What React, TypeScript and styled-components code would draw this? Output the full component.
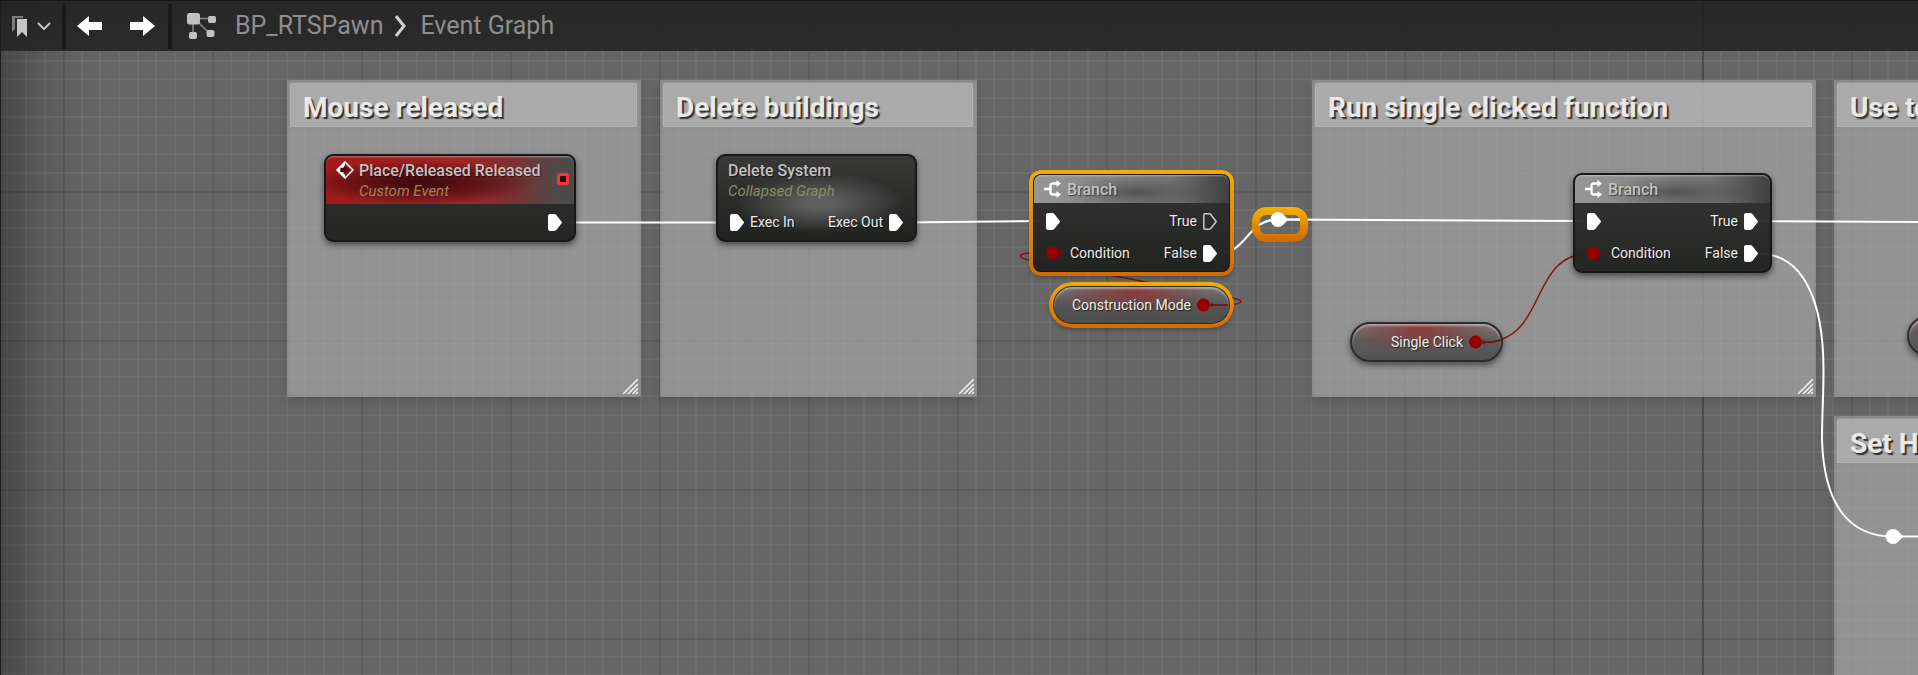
import React from "react";
import styled, { createGlobalStyle, css } from "styled-components";

const GlobalStyle = createGlobalStyle`
  *, *::before, *::after { box-sizing: border-box; }
  body {
    margin: 0;
    background: #666;
    font-family: Roboto, "Liberation Sans", sans-serif;
  }
  h2, h3, p { margin: 0; }
`;

/* ---------- page and grid ---------- */

const minor = "rgba(255, 255, 255, 0.05)";

const minorLines = (angle: string) =>
  `linear-gradient(${angle}, ${[19, 37, 56, 75, 93, 112, 131]
    .map((p) => `transparent ${p - 1}px, ${minor} ${p - 1}px, ${minor} ${p + 1}px, transparent ${p + 1}px`)
    .join(", ")})`;

const Editor = styled.div`
  display: grid;
  grid-template: minmax(100vh, auto) / minmax(0, 1fr);
  overflow: hidden;
  border-left: 1px solid #1c1c1c;
  background-color: #666;
  background-image:
    linear-gradient(90deg, rgba(0, 0, 0, 0.3), rgba(0, 0, 0, 0.12) 40px, rgba(0, 0, 0, 0.04) 75px, transparent 110px),
    linear-gradient(rgba(0, 0, 0, 0.18), rgba(0, 0, 0, 0.18)),
    linear-gradient(90deg, rgba(0, 0, 0, 0.1) 2px, transparent 2px),
    linear-gradient(180deg, rgba(0, 0, 0, 0.1) 2px, transparent 2px),
    ${minorLines("90deg")},
    ${minorLines("180deg")};
  background-size: auto, 2px 100%, 149px 149px, 149px 149px, 149px 149px, 149px 149px;
  background-position: 0 0, 1701px 0, 62px 42px, 62px 42px, 62px 42px, 62px 42px;
  background-repeat: no-repeat, no-repeat, repeat, repeat, repeat, repeat;

  > * { grid-area: 1 / 1; }
`;

const Graph = styled.main`
  position: relative;
  overflow: hidden;
`;

/* ---------- toolbar ---------- */

const Toolbar = styled.header`
  position: relative;
  z-index: 2;
  align-self: start;
  display: flex;
  align-items: center;
  height: 51px;
  padding-left: 10px;
  border-top: 1px solid #161616;
  background: linear-gradient(rgba(32, 32, 32, 0.9), rgba(38, 38, 38, 0.92));
`;

const ToolButton = styled.button`
  display: flex;
  align-items: center;
  gap: 9px;
  padding: 0;
  border: 0;
  background: none;
  color: #fff;
  cursor: pointer;
`;

const Divider = styled.span`
  width: 4px;
  height: 45px;
  background: #191919;
`;

const Bookmarks = styled(ToolButton)`
  width: 51px;
`;

const History = styled.div`
  display: flex;
  justify-content: space-between;
  width: 102px;
  padding: 0 13px 0 11px;
`;

const Breadcrumb = styled.nav`
  display: flex;
  align-items: center;
  padding-left: 15px;
  color: #8e8e8e;
  font-size: 25px;
  line-height: 30px;
`;

const Crumb = styled.a`
  color: inherit;
  text-decoration: none;
`;

const GraphIcon = styled.svg`
  margin-right: 18px;
`;

const CrumbArrow = styled.svg`
  margin: 0 13px 0 11px;
`;

/* ---------- comment boxes ---------- */

type Box = { $x: number; $y: number; $w: number; $h?: number };

const placed = css<Box>`
  position: absolute;
  left: ${(p) => p.$x - 1}px;
  top: ${(p) => p.$y}px;
  width: ${(p) => p.$w}px;
  ${(p) => p.$h && `height: ${p.$h}px;`}
`;

const CommentBox = styled.section<Box>`
  ${placed}
  padding: 3px 4px 3px 3px;
  background: rgba(150, 150, 150, 0.9);
  background: linear-gradient(rgba(166, 166, 166, 0.7), rgba(166, 166, 166, 0.7));
  box-shadow:
    inset 0 0 5px rgba(0, 0, 0, 0.14),
    0 4px 9px rgba(0, 0, 0, 0.16);
`;

const CommentTitle = styled.h2`
  height: 44px;
  padding: 5px 0 0 12px;
  overflow: hidden;
  border: 1px solid rgba(255, 255, 255, 0.1);
  border-radius: 3px 3px 0 0;
  background: rgba(178, 178, 178, 0.75);
  color: #e9e9e9;
  font-size: 28px;
  line-height: 37px;
  font-weight: 700;
  white-space: nowrap;
  text-shadow: 2px 2px 1px #333;
`;

const Grip = styled.svg`
  position: absolute;
  right: 3px;
  bottom: 3px;
`;

function Comment({ title, ...box }: { title: string } & Box) {
  return (
    <CommentBox {...box}>
      <CommentTitle>{title}</CommentTitle>
      <Grip width="15" height="15" viewBox="0 0 15 15" stroke="#f4f4f4" strokeWidth="1.5" fill="none">
        <path d="M0 15L15 0M5 15L15 5M9.500 15L15 9.500M13 15L15 13" />
      </Grip>
    </CommentBox>
  );
}

/* ---------- nodes ---------- */

type Kind = "event" | "graph" | "branch";

const selection = css`
  &::after {
    content: "";
    position: absolute;
    inset: -5px;
    border: 4px solid transparent;
    border-radius: inherit;
    background: linear-gradient(#f2ac06, #d06a04) border-box;
    mask: linear-gradient(#000 0 0) padding-box, linear-gradient(#000 0 0);
    mask-composite: exclude;
  }
`;

const NodeBox = styled.article<Box & { $kind: Kind; $selected?: boolean }>`
  ${placed}
  border: 2px solid #171817;
  border-radius: 9px;
  background: ${(p) =>
    p.$kind === "graph"
      ? `radial-gradient(ellipse 84px 30px at 52% 56%, rgba(96, 96, 96, 0.95) 20%, rgba(84, 84, 84, 0.6) 60%, transparent) padding-box,
         linear-gradient(#3a3b39, #2c2d2b 50%, #20221f) border-box`
      : "linear-gradient(rgba(44, 45, 44, 0.97) 30%, rgba(30, 32, 29, 0.95)) border-box"};
  box-shadow: 0 3px 6px rgba(0, 0, 0, 0.5);
  ${(p) => p.$selected && selection}
  ${(p) => p.$selected && "&::after { border-radius: 12px; }"}
`;

const headFill: Record<Kind, string> = {
  event: `radial-gradient(ellipse 115px 22px at 38% 56%, rgba(64, 10, 12, 0.95) 15%, rgba(64, 10, 12, 0.55) 60%, transparent),
    linear-gradient(90deg, #a01a1c, #a02426 55%, #7d2f31 75%, #504a4a 93%, #4a4a4a)`,
  graph: "none",
  branch: `radial-gradient(ellipse 74px 16px at 52% 62%, rgba(56, 56, 56, 0.6), rgba(64, 64, 64, 0.32) 50%, transparent),
    linear-gradient(90deg, #969696, #8a8a8a 30%, #747474 70%, #4c4c4c 92%, #404040)`,
};

const NodeHead = styled.header<{ $kind: Kind }>`
  display: flex;
  gap: 5px;
  padding: 4px 10px 3px;
  border-radius: 7px 7px 0 0;
  background: ${(p) => headFill[p.$kind]};
  box-shadow: ${(p) => (p.$kind === "graph" ? "none" : "inset 0 2px 2px -1px rgba(255, 255, 255, 0.4)")};
`;

const NodeTitle = styled.h3`
  color: #c2c2c2;
  font-size: 16px;
  line-height: 21px;
  font-weight: 500;
  white-space: nowrap;
  text-shadow: 1px 1px 1px rgba(0, 0, 0, 0.5);
`;

const NodeSubtitle = styled.p<{ $kind: Kind }>`
  color: ${(p) => (p.$kind === "event" ? "#a3825c" : "#8c8c68")};
  font-size: 15px;
  line-height: 20px;
  font-style: italic;
  white-space: nowrap;
`;

const HeadIcon = styled.svg`
  flex: none;
  margin-top: 1px;
`;

const Delegate = styled.span`
  width: 12px;
  height: 12px;
  margin: 13px -5px 0 auto;
  border: 3px solid #fb3437;
  border-radius: 3px;
  background: #250808;
`;

const Pins = styled.div`
  display: grid;
  gap: 12px;
  padding: 8px 12px;
`;

const PinRow = styled.div`
  display: flex;
  align-items: center;
  justify-content: space-between;
  height: 20px;
`;

const Pin = styled.span<{ $out?: boolean }>`
  display: flex;
  flex-direction: ${(p) => (p.$out ? "row-reverse" : "row")};
  align-items: center;
  gap: 6px;
  margin-left: ${(p) => (p.$out ? "auto" : 0)};
  color: #ececec;
  font-size: 14px;
  line-height: 20px;
  white-space: nowrap;
  text-shadow: 1px 1px 1px rgba(0, 0, 0, 0.6);
`;

const ExecPin = ({ hollow }: { hollow?: boolean }) => (
  <svg width="14" height="17" viewBox="0 0 14 17">
    <path
      d="M0.800 2Q0.800 0.800 2 0.800H6.200Q7.200 0.800 8 1.700L13.200 8.500L8 15.300Q7.200 16.200 6.200 16.200H2Q0.800 16.200 0.800 15Z"
      fill={hollow ? "none" : "#fff"}
      stroke={hollow ? "#c9c9c9" : "#fff"}
      strokeWidth="1.500"
    />
  </svg>
);

const BoolPin = () => (
  <svg width="18" height="14" viewBox="0 0 18 14" fill="#960000">
    <circle cx="6.500" cy="7" r="6.500" />
    <path d="M14 3.800L17 7L14 10.200Z" opacity="0.8" />
  </svg>
);

const BranchIcon = () => (
  <HeadIcon width="18" height="18" viewBox="0 0 18 18" fill="none" stroke="#fff" strokeWidth="2.400">
    <path d="M0 9H6M14 3.500H9Q6.500 3.500 6.500 6V12Q6.500 14.500 9 14.500H14" />
    <path d="M12.500 0L17 3.500L12.500 7ZM12.500 11L17 14.500L12.500 18Z" fill="#fff" stroke="none" />
  </HeadIcon>
);

const EventIcon = () => (
  <HeadIcon width="18" height="18" viewBox="0 0 18 18">
    <path d="M9 1L17 9L9 17L1 9Z" fill="none" stroke="#fff" strokeWidth="1.500" />
    <path d="M9 0.500V5.500H7.500V6.800H4.500V11.200H7.500V12.500H9V17.500L0.500 9Z" fill="#fff" />
    <path d="M8 4.500L13 9L8 13.500V11H4.500V7H8Z" fill="#3a0808" />
  </HeadIcon>
);

function BranchNode({ x, y, selected, trueLinked }: { x: number; y: number; selected?: boolean; trueLinked?: boolean }) {
  return (
    <NodeBox $x={x} $y={y} $w={199} $kind="branch" $selected={selected}>
      <NodeHead $kind="branch">
        <BranchIcon />
        <NodeTitle>Branch</NodeTitle>
      </NodeHead>
      <Pins>
        <PinRow>
          <Pin><ExecPin /></Pin>
          <Pin $out><ExecPin hollow={!trueLinked} />True</Pin>
        </PinRow>
        <PinRow>
          <Pin><BoolPin />Condition</Pin>
          <Pin $out><ExecPin />False</Pin>
        </PinRow>
      </Pins>
    </NodeBox>
  );
}

const Variable = styled.article<Box & { $selected?: boolean }>`
  ${placed}
  display: flex;
  align-items: center;
  justify-content: flex-end;
  height: 40px;
  padding-right: 14px;
  border: 2px solid #2b2b2b;
  border-radius: 20px;
  background:
    radial-gradient(ellipse 84px 24px at 46% 16%, rgba(150, 40, 42, 0.75), rgba(130, 50, 50, 0.4) 50%, transparent),
    linear-gradient(rgba(125, 125, 125, 0.9), rgba(84, 84, 84, 0.85) 45%, rgba(74, 74, 74, 0.9));
  box-shadow:
    inset 0 2px 2px rgba(255, 255, 255, 0.4),
    0 3px 6px rgba(0, 0, 0, 0.5);
  ${(p) => p.$selected && selection}
  ${(p) => p.$selected && "&::after { border-radius: 25px; }"}
`;

const Reroute = styled.span<Box>`
  ${placed}
  border: 8px solid transparent;
  border-radius: 14px;
  background: linear-gradient(#f5b000, #cf6800) border-box;
  mask: linear-gradient(#000 0 0) padding-box, linear-gradient(#000 0 0);
  mask-composite: exclude;
`;

const WireLayer = styled.svg`
  position: absolute;
  left: -1px;
  top: 0;
  width: 100%;
  height: 100%;
  overflow: visible;
  pointer-events: none;
`;

const Knot = ({ x, y }: { x: number; y: number }) => (
  <g fill="#fff">
    <circle cx={x} cy={y} r="6.500" />
    <path d={`M${x + 6} ${y - 3}L${x + 9.5} ${y}L${x + 6} ${y + 3}Z`} opacity="0.8" />
  </g>
);

export default function App() {
  return (
    <>
      <GlobalStyle />
      <Editor>
        <Toolbar>
          <Bookmarks aria-label="Bookmarks">
            <svg width="17" height="22" viewBox="0 0 17 22">
              <path d="M1 17V1H12V3H4V14Z" fill="#7d7d7d" />
              <path d="M6 4H16V22L11 17L6 22Z" fill="#c6c6c6" />
            </svg>
            <svg width="14" height="8" viewBox="0 0 14 8" fill="none" stroke="#c4c4c4" strokeWidth="2">
              <path d="M1 1L7 7L13 1" />
            </svg>
          </Bookmarks>
          <Divider />
          <History>
            <ToolButton aria-label="Back">
              <svg width="26" height="20" viewBox="0 0 26 20" fill="#fff">
                <path d="M0 10L12 0V6H25V14H12V20Z" />
              </svg>
            </ToolButton>
            <ToolButton aria-label="Forward">
              <svg width="26" height="20" viewBox="0 0 26 20" fill="#fff">
                <path d="M26 10L14 0V6H1V14H14V20Z" />
              </svg>
            </ToolButton>
          </History>
          <Divider />
          <Breadcrumb aria-label="Graph path">
            <GraphIcon width="30" height="28" viewBox="0 0 30 28" fill="#c2c2c2">
              <path d="M7 6.500H24M6 6V23M7 6L23 22" stroke="#8a8a8a" strokeWidth="1.500" />
              <rect x="0" y="1" width="13" height="11.500" rx="2.500" />
              <rect x="21" y="4" width="8" height="7" rx="2" />
              <rect x="2" y="20" width="8" height="7" rx="2" />
              <rect x="19.500" y="18" width="8" height="7" rx="2" />
            </GraphIcon>
            <Crumb href="#blueprint">BP_RTSPawn</Crumb>
            <CrumbArrow width="13" height="22" viewBox="0 0 13 22" fill="none" stroke="#d2d2d2" strokeWidth="3">
              <path d="M2 1L10 11L2 21" />
            </CrumbArrow>
            <Crumb href="#event-graph">Event Graph</Crumb>
          </Breadcrumb>
        </Toolbar>

        <Graph>
          <Comment title="Mouse released" $x={287} $y={80} $w={354} $h={317} />
          <Comment title="Delete buildings" $x={660} $y={80} $w={317} $h={317} />
          <Comment title="Run single clicked function" $x={1312} $y={80} $w={504} $h={317} />
          <Comment title="Use to select" $x={1834} $y={80} $w={400} $h={317} />
          <Comment title="Set Hold" $x={1834} $y={416} $w={400} $h={320} />

          <WireLayer fill="none" stroke="#fff" strokeWidth="2">
            <path d="M560 222.500H718" />
            <path d="M903 222.500L1040 221" />
            <path d="M1216 254C1248 254 1246 219.500 1278 219.500L1590 221" />
            <path d="M1756 221L1930 222" />
            <path d="M1758 253.500C1804 253.500 1823.500 302 1823.500 370C1823.500 400 1822 410 1822 440C1824 506 1850 536.500 1893 536.500H1930" />
            <g stroke="#8e1013" strokeWidth="1.500">
              <path d="M1210 305H1229C1246 303 1243 300 1232 298L1034 261C1016 258 1016 254 1032 252.500H1048" />
              <path d="M1482 342.500C1550 342.500 1526 253 1592 253" />
            </g>
          </WireLayer>

          <NodeBox $x={324} $y={154} $w={252} $kind="event">
            <NodeHead $kind="event">
              <EventIcon />
              <div>
                <NodeTitle>Place/Released Released</NodeTitle>
                <NodeSubtitle $kind="event">Custom Event</NodeSubtitle>
              </div>
              <Delegate />
            </NodeHead>
            <Pins>
              <PinRow>
                <Pin $out><ExecPin /></Pin>
              </PinRow>
            </Pins>
          </NodeBox>

          <NodeBox $x={716} $y={154} $w={201} $kind="graph">
            <NodeHead $kind="graph">
              <div>
                <NodeTitle>Delete System</NodeTitle>
                <NodeSubtitle $kind="graph">Collapsed Graph</NodeSubtitle>
              </div>
            </NodeHead>
            <Pins>
              <PinRow>
                <Pin><ExecPin />Exec In</Pin>
                <Pin $out><ExecPin />Exec Out</Pin>
              </PinRow>
            </Pins>
          </NodeBox>

          <BranchNode x={1032} y={173} selected />
          <Variable $x={1052} $y={285} $w={179} $selected>
            <Pin $out>
              <BoolPin />
              Construction Mode
            </Pin>
          </Variable>
          <Reroute $x={1252} $y={207} $w={56} $h={35} />

          <BranchNode x={1573} y={173} trueLinked />
          <Variable $x={1350} $y={322} $w={153}>
            <Pin $out>
              <BoolPin />
              Single Click
            </Pin>
          </Variable>
          <Variable $x={1907} $y={316} $w={160} />

          <WireLayer fill="none" stroke="#fff" strokeWidth="2">
            <path d="M1259 225Q1266 219.500 1278 219.500H1300" />
            <path d="M1210 305H1228M1482 342.500Q1493 342.500 1502 340" stroke="#7a0c0e" strokeWidth="1.500" />
            <Knot x={1278} y={219.5} />
            <Knot x={1893} y={536.5} />
          </WireLayer>
        </Graph>
      </Editor>
    </>
  );
}
